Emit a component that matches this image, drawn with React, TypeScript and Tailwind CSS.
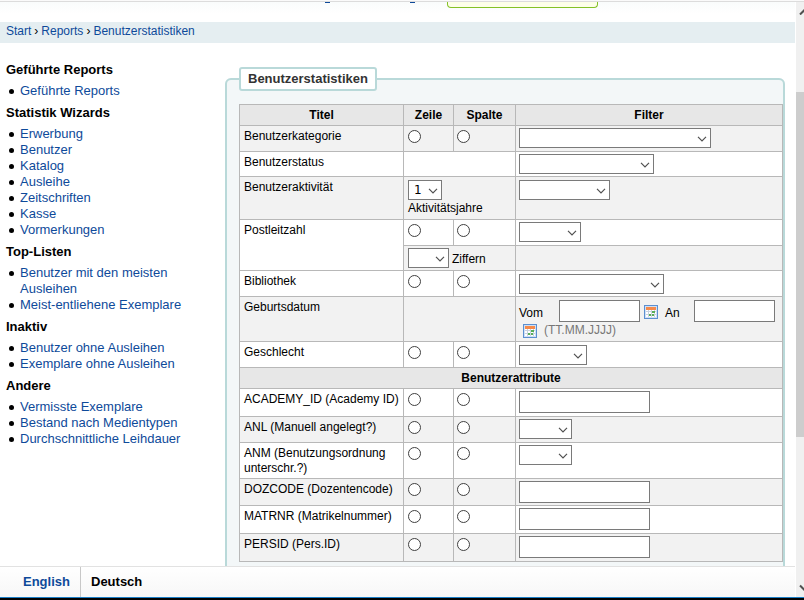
import type { ReactNode } from "react";

const groups = [
  { title: "Geführte Reports", items: ["Geführte Reports"] },
  {
    title: "Statistik Wizards",
    items: ["Erwerbung", "Benutzer", "Katalog", "Ausleihe", "Zeitschriften", "Kasse", "Vormerkungen"],
  },
  { title: "Top-Listen", items: ["Benutzer mit den meisten Ausleihen", "Meist-entliehene Exemplare"] },
  { title: "Inaktiv", items: ["Benutzer ohne Ausleihen", "Exemplare ohne Ausleihen"] },
  { title: "Andere", items: ["Vermisste Exemplare", "Bestand nach Medientypen", "Durchschnittliche Leihdauer"] },
];

const cell = "border border-[#b8b8b8] p-0 pl-1 align-top";
const choiceCell = "border border-[#b8b8b8] p-0 pl-[3px] align-top";
const filterCell = "border border-[#b8b8b8] p-0 pl-[3px] pt-0.5 align-top";
const heading = "border border-[#b8b8b8] bg-[#e7e7e7] p-0 text-center font-bold";
const field = "block h-[22px] border border-[#7a7a7a] bg-white px-1 outline-none";

function Link({ children }: { children: ReactNode }) {
  return (
    <a href="#" className="text-[#0e4a9a]">
      {children}
    </a>
  );
}

function Select({ label, width, value = "" }: { label: string; width: string; value?: string }) {
  return (
    <span className={`relative inline-block h-5 align-top ${width}`}>
      <select
        aria-label={label}
        className="block h-5 w-full appearance-none border border-[#7a7a7a] bg-white pl-[5px] font-['DejaVu_Sans',sans-serif] text-xs leading-none outline-none"
      >
        <option>{value}</option>
      </select>
      <svg
        className="pointer-events-none absolute top-2 right-1 h-[6px] w-[10px]"
        viewBox="0 0 10 6"
        fill="none"
        stroke="#505050"
        strokeWidth="1.2"
      >
        <path d="M1 0.8 5 4.8 9 0.8" />
      </svg>
    </span>
  );
}

function Radio({ group, label }: { group: string; label: string }) {
  return (
    <input
      type="radio"
      name={group}
      aria-label={label}
      className="mt-1 block size-[13px] appearance-none rounded-full border border-[#404040] bg-white checked:border-4"
    />
  );
}

function Choices({ name }: { name: string }) {
  return (
    <>
      <td className={cell}>
        <Radio group="zeile" label={`${name} Zeile`} />
      </td>
      <td className={choiceCell}>
        <Radio group="spalte" label={`${name} Spalte`} />
      </td>
    </>
  );
}

function Title({ children, rows = 1 }: { children: ReactNode; rows?: number }) {
  return (
    <th scope="row" rowSpan={rows} className={`${cell} bg-inherit pt-[3px] text-left font-normal`}>
      {children}
    </th>
  );
}

function Calendar({ label }: { label: string }) {
  return (
    <button type="button" aria-label={label} className="mt-0.5 ml-1 block size-[14px]">
      <svg viewBox="0 0 14 14" className="block size-[14px]" shapeRendering="crispEdges">
        <rect width="14" height="14" fill="#5b8fd0" />
        <rect x="1" y="1" width="12" height="12" fill="#cfe0f6" />
        <rect x="2" y="2" width="10" height="10" fill="#fff" />
        <rect x="2" y="2" width="10" height="3" fill="#f58a4b" />
        <path d="M2 6.500h10M2 9.500h10M4.500 5v7M7.500 5v7M10.500 5v7" stroke="#c9d2df" />
        <path d="M8 6h3v2H8zM5 9h2v2H5zM8 9h2v2H8z" fill="#58ad58" />
      </svg>
    </button>
  );
}

const attributes = [
  { name: "ACADEMY_ID (Academy ID)", height: "h-[28px]", choice: false },
  { name: "ANL (Manuell angelegt?)", height: "h-[26px]", choice: true },
  { name: "ANM (Benutzungsordnung unterschr.?)", height: "h-[36px]", choice: true },
  { name: "DOZCODE (Dozentencode)", height: "h-[27px]", choice: false },
  { name: "MATRNR (Matrikelnummer)", height: "h-[28px]", choice: false },
  { name: "PERSID (Pers.ID)", height: "h-[28px]", choice: false },
];

function StatisticsTable() {
  return (
    <table className="w-full table-fixed border-collapse bg-white text-xs leading-[15px]">
      <colgroup>
        <col className="w-[164px]" />
        <col className="w-[50px]" />
        <col className="w-[62px]" />
        <col />
      </colgroup>
      <thead>
        <tr className="h-[21px]">
          <th className={heading}>Titel</th>
          <th className={heading}>Zeile</th>
          <th className={heading}>Spalte</th>
          <th className={heading}>Filter</th>
        </tr>
      </thead>
      <tbody>
        <tr className="h-[26px] bg-[#f2f2f2]">
          <Title>Benutzerkategorie</Title>
          <Choices name="Benutzerkategorie" />
          <td className={filterCell}>
            <Select label="Benutzerkategorie" width="w-48" />
          </td>
        </tr>
        <tr className="h-[25px] bg-white">
          <Title>Benutzerstatus</Title>
          <td colSpan={2} className={cell} />
          <td className={filterCell}>
            <Select label="Benutzerstatus" width="w-[135px]" />
          </td>
        </tr>
        <tr className="h-[43px] bg-[#f2f2f2]">
          <Title>Benutzeraktivität</Title>
          <td colSpan={2} className={`${cell} pt-[3px]`}>
            <Select label="Aktivitätsjahre" width="w-[34px]" value="1" />
            <div className="mt-px">Aktivitätsjahre</div>
          </td>
          <td className={`${choiceCell} pt-[3px]`}>
            <Select label="Benutzeraktivität" width="w-[91px]" />
          </td>
        </tr>
        <tr className="h-[26px] bg-white">
          <Title rows={2}>Postleitzahl</Title>
          <Choices name="Postleitzahl" />
          <td className={filterCell}>
            <Select label="Postleitzahl" width="w-[62px]" />
          </td>
        </tr>
        <tr className="h-[25px] bg-[#f2f2f2]">
          <td colSpan={2} className={`${cell} pt-0.5`}>
            <div className="flex items-center gap-[3px]">
              <Select label="Ziffern" width="w-[41px]" />
              <span className="pt-0.5">Ziffern</span>
            </div>
          </td>
          <td className={filterCell} />
        </tr>
        <tr className="h-[26px] bg-white">
          <Title>Bibliothek</Title>
          <Choices name="Bibliothek" />
          <td className={`${choiceCell} pt-[3px]`}>
            <Select label="Bibliothek" width="w-[145px]" />
          </td>
        </tr>
        <tr className="h-[45px] bg-[#f2f2f2]">
          <Title>Geburtsdatum</Title>
          <td colSpan={2} className={cell} />
          <td className={`${choiceCell} pt-[3px]`}>
            <div className="flex flex-wrap items-center">
              <label htmlFor="vom" className="w-10 pt-1">
                Vom
              </label>
              <input id="vom" className={`${field} w-[81px]`} />
              <Calendar label="Startdatum wählen" />
              <label htmlFor="an" className="ml-[7px] w-[29px] pt-1">
                An
              </label>
              <input id="an" className={`${field} w-[81px]`} />
              <Calendar label="Enddatum wählen" />
              <span className="ml-[7px] text-[#777]">(TT.MM.JJJJ)</span>
            </div>
          </td>
        </tr>
        <tr className="h-[26px] bg-white">
          <Title>Geschlecht</Title>
          <Choices name="Geschlecht" />
          <td className={`${choiceCell} pt-[3px]`}>
            <Select label="Geschlecht" width="w-[68px]" />
          </td>
        </tr>
        <tr className="h-[21px]">
          <th colSpan={4} className={heading}>
            Benutzerattribute
          </th>
        </tr>
        {attributes.map((a) => (
          <tr key={a.name} className={`${a.height} bg-white odd:bg-[#f2f2f2]`}>
            <Title>{a.name}</Title>
            <Choices name={a.name} />
            <td className={filterCell}>
              {a.choice ? (
                <Select label={a.name} width="w-[53px]" />
              ) : (
                <input aria-label={a.name} className={`${field} w-[131px]`} />
              )}
            </td>
          </tr>
        ))}
      </tbody>
    </table>
  );
}

function Arrow({ up = false }: { up?: boolean }) {
  return (
    <svg viewBox="0 0 8 8" className="block size-2 overflow-hidden" fill="none" stroke="#505050" strokeWidth="2">
      <path d={up ? "M4 7.500 8.500 3 13 7.500" : "M4 1.500 8.500 6 13 1.500"} />
    </svg>
  );
}

export default function App() {
  return (
    <div className="flex h-screen flex-col overflow-hidden bg-white font-['Liberation_Sans',Arial,sans-serif] text-black">
      <div className="h-0.5 shrink-0 border-b border-[#dcdcdc] bg-[#fafafa]" />
      <div className="flex min-h-0 flex-1">
        <div className="mr-px flex min-w-0 flex-1 flex-col">
          <header className="flex h-5 shrink-0 items-start bg-linear-to-b from-[#f9fcfc] to-white to-60% pl-[325px]">
            <span className="h-px w-[5px] bg-[#0e4a9a]" />
            <span className="ml-20 h-px w-[5px] bg-[#0e4a9a]" />
            <span className="ml-8 h-1.5 w-[151px] rounded-b border border-t-0 border-[#84c225] bg-[#fdffe9]" />
          </header>
          <nav
            aria-label="Brotkrumen"
            className="flex h-[21px] shrink-0 items-center gap-[3px] bg-[#e5eef1] pb-1 pl-1.5 text-xs leading-4"
          >
            <Link>Start</Link>
            <span>›</span>
            <Link>Reports</Link>
            <span>›</span>
            <Link>Benutzerstatistiken</Link>
          </nav>
          <div className="flex min-h-0 flex-1 overflow-hidden pr-2.5">
            <aside className="w-[225px] shrink-0 pt-[19px] pl-1.5 text-[13px] leading-4">
              {groups.map((g) => (
                <section key={g.title} className="mb-1.5">
                  <h2 className="mb-[5px] font-bold">{g.title}</h2>
                  <ul className="pr-10">
                    {g.items.map((item) => (
                      <li key={item} className="flex">
                        <span className="mt-1.5 mr-1.5 ml-[3px] size-[5px] shrink-0 rounded-full bg-black" />
                        <span className="-mr-4">
                          <Link>{item}</Link>
                        </span>
                      </li>
                    ))}
                  </ul>
                </section>
              ))}
            </aside>
            <main className="min-w-0 flex-1 pt-6">
              <fieldset className="rounded-md border-2 border-[#b9d9d9] bg-[#f3f7f8] pb-10 pl-3">
                <legend className="mb-[13px] rounded-[3px] border-2 border-[#b9d9d9] bg-white px-[7px] text-[13px] leading-5 font-bold text-[#333]">
                  Benutzerstatistiken
                </legend>
                <StatisticsTable />
              </fieldset>
            </main>
          </div>
          <footer className="flex h-[31px] shrink-0 border-t border-[#e2e2e2] bg-linear-to-b from-white to-[#f7f7f7] text-[13px] leading-[29px] font-bold">
            <div className="w-[81px] border-r border-[#c8c8c8] pl-[23px]">
              <Link>English</Link>
            </div>
            <span className="pl-2.5">Deutsch</span>
          </footer>
        </div>
        <div aria-hidden="true" className="flex w-2 shrink-0 flex-col bg-[#f0f0f0] py-[5px]">
          <Arrow up />
          <div className="flex-[77_1_0]" />
          <div className="flex-[345_1_0] bg-[#cdcdcd]" />
          <div className="flex-[147_1_0]" />
          <Arrow />
        </div>
      </div>
      <div className="h-[3px] shrink-0 border-t border-[#1b7fc6] bg-black" />
    </div>
  );
}
